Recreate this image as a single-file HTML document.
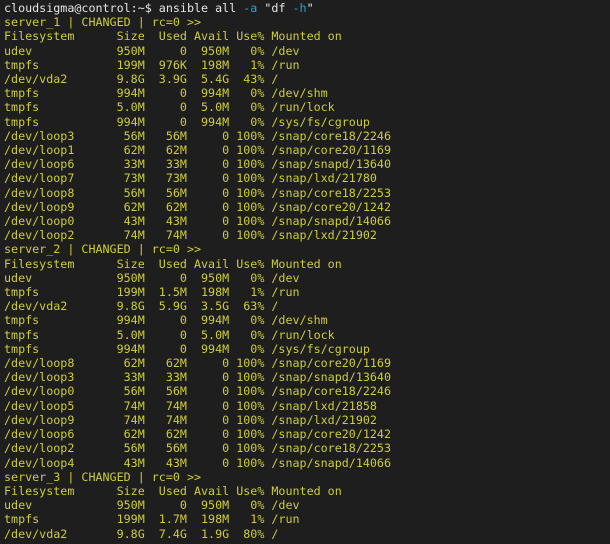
<!DOCTYPE html>
<html><head><style>
html,body{margin:0;padding:0;background:#1e1e1e;width:610px;height:544px;overflow:hidden}
pre{margin:0;padding:1px 0 0 4px;font-family:"DejaVu Sans Mono","Liberation Mono",monospace;font-size:11.7px;line-height:14.2px;color:#cdcd3a;white-space:pre}
.w{color:#e6e6e6}.c{color:#2f9fd0}
</style></head><body><pre><span class="w">cloudsigma@control:~$ ansible all <span class="c">-a</span> "df <span class="c">-h</span>"</span>
server_1 | CHANGED | rc=0 >>
Filesystem      Size  Used Avail Use% Mounted on
udev            950M     0  950M   0% /dev
tmpfs           199M  976K  198M   1% /run
/dev/vda2       9.8G  3.9G  5.4G  43% /
tmpfs           994M     0  994M   0% /dev/shm
tmpfs           5.0M     0  5.0M   0% /run/lock
tmpfs           994M     0  994M   0% /sys/fs/cgroup
/dev/loop3       56M   56M     0 100% /snap/core18/2246
/dev/loop1       62M   62M     0 100% /snap/core20/1169
/dev/loop6       33M   33M     0 100% /snap/snapd/13640
/dev/loop7       73M   73M     0 100% /snap/lxd/21780
/dev/loop8       56M   56M     0 100% /snap/core18/2253
/dev/loop9       62M   62M     0 100% /snap/core20/1242
/dev/loop0       43M   43M     0 100% /snap/snapd/14066
/dev/loop2       74M   74M     0 100% /snap/lxd/21902
server_2 | CHANGED | rc=0 >>
Filesystem      Size  Used Avail Use% Mounted on
udev            950M     0  950M   0% /dev
tmpfs           199M  1.5M  198M   1% /run
/dev/vda2       9.8G  5.9G  3.5G  63% /
tmpfs           994M     0  994M   0% /dev/shm
tmpfs           5.0M     0  5.0M   0% /run/lock
tmpfs           994M     0  994M   0% /sys/fs/cgroup
/dev/loop8       62M   62M     0 100% /snap/core20/1169
/dev/loop3       33M   33M     0 100% /snap/snapd/13640
/dev/loop0       56M   56M     0 100% /snap/core18/2246
/dev/loop5       74M   74M     0 100% /snap/lxd/21858
/dev/loop9       74M   74M     0 100% /snap/lxd/21902
/dev/loop6       62M   62M     0 100% /snap/core20/1242
/dev/loop2       56M   56M     0 100% /snap/core18/2253
/dev/loop4       43M   43M     0 100% /snap/snapd/14066
server_3 | CHANGED | rc=0 >>
Filesystem      Size  Used Avail Use% Mounted on
udev            950M     0  950M   0% /dev
tmpfs           199M  1.7M  198M   1% /run
/dev/vda2       9.8G  7.4G  1.9G  80% /</pre></body></html>
